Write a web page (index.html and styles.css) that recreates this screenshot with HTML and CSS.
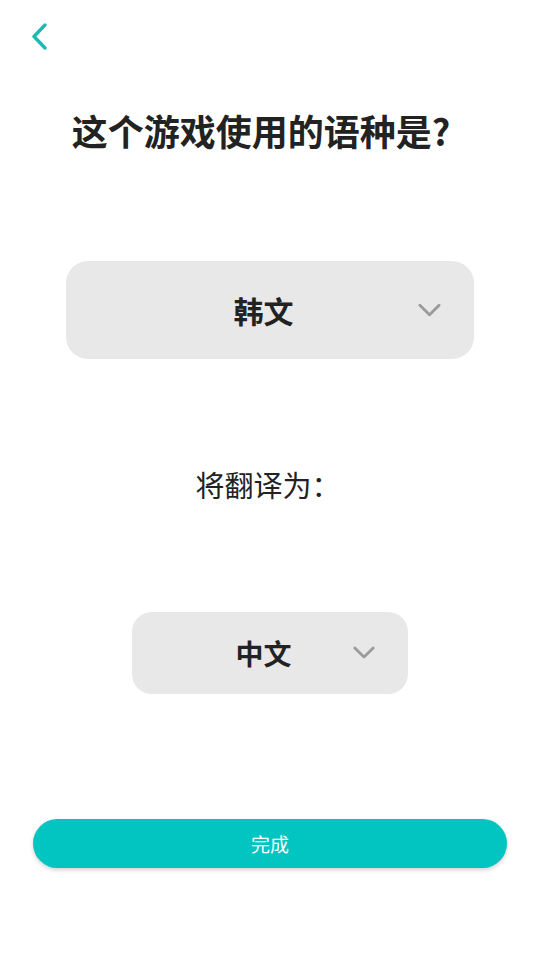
FILE: index.html
```html
<!DOCTYPE html>
<html lang="zh-CN">
<head>
<meta charset="utf-8">
<link rel="stylesheet" href="styles.css">
</head>
<body>
<div class="page">
  <header class="topbar">
    <svg class="back" viewBox="0 0 16 27" width="16" height="27"><path d="M14 2 L3 13.5 L14 25" fill="none" stroke="#1fb9b5" stroke-width="3.4" stroke-linecap="round" stroke-linejoin="round"/></svg>
  </header>
  <h1 class="title">这个游戏使用的语种是?</h1>
  <div class="select select-lg">
    <span></span>
    <span class="value">韩文</span>
    <svg class="chev" viewBox="0 0 24 14" width="23" height="14"><path d="M2 2 L12 12 L22 2" fill="none" stroke="#9b9b9b" stroke-width="3" stroke-linecap="round" stroke-linejoin="round"/></svg>
  </div>
  <p class="label">将翻译为<span class="colon">：</span></p>
  <div class="select select-sm">
    <span></span>
    <span class="value">中文</span>
    <svg class="chev" viewBox="0 0 24 14" width="22" height="13"><path d="M2 2 L12 12 L22 2" fill="none" stroke="#9b9b9b" stroke-width="3" stroke-linecap="round" stroke-linejoin="round"/></svg>
  </div>
  <button class="done">完成</button>
</div>
</body>
</html>
```
FILE: styles.css
```css
* { box-sizing: border-box; }
html, body { margin: 0; padding: 0; background: #fff; }
body {
  font-family: "Noto Sans CJK SC", "Noto Sans", sans-serif;
  color: #222;
  width: 540px;
  height: 960px;
  overflow: hidden;
}
.page {
  display: flex;
  flex-direction: column;
  align-items: center;
}
.topbar {
  align-self: stretch;
  padding: 23px 0 0 31px;
  height: 52px;
}
.back { display: block; }
.title {
  margin: 57px 0 0 0;
  padding-right: 18px;
  font-size: 36px;
  font-weight: 700;
  line-height: 1.2;
  letter-spacing: 0;
}
.select {
  display: grid;
  grid-template-columns: 1fr auto 1fr;
  align-items: center;
  background: #e8e8e8;
  border-radius: 22px;
  padding: 0 33px 0 20px;
}
.select .value {
  font-weight: 700;
  line-height: 1;
}
.select .chev { justify-self: end; display: block; }
.select-lg {
  width: 408px;
  height: 98px;
  margin-top: 109px;
}
.select-lg .value { font-size: 30px; }
.select-sm {
  width: 276px;
  height: 82px;
  margin-top: 110px;
  border-radius: 20px;
}
.select-sm .value { font-size: 28px; }
.label {
  margin: 108px 0 0 0;
  font-size: 29px;
  line-height: 1.2;
  padding-right: 4px;
}
.colon { font-family: "Noto Sans CJK JP", sans-serif; }
.done {
  margin-top: 125px;
  width: 474px;
  height: 49px;
  border: 0;
  border-radius: 25px;
  background: #02c4c0;
  color: #fff;
  font-family: "Noto Sans CJK SC", sans-serif;
  font-size: 19px;
  box-shadow: 0 2px 4px rgba(0, 0, 0, 0.18);
  padding: 0;
}
```
